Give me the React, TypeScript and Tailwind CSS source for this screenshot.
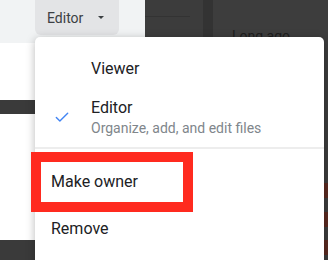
import { Check } from "lucide-react";

export default function App() {
  return (
    <div className="relative flex h-[260px] w-[328px] overflow-hidden font-['Roboto',sans-serif]">
      {/* Left page area */}
      <div className="flex w-[145px] flex-col">
        <div className="h-[43px] bg-[#f1f3f4] pl-[35px]">
          <div className="flex h-[35px] w-[84px] items-center rounded-b-[6px] bg-[#e3e4e6] pl-[12px]">
            <span className="text-[14px] leading-none text-[#3c4043]">Editor</span>
            <svg width="6" height="3" viewBox="0 0 6 3" className="ml-[15px]">
              <path d="M0 0h6L3 3z" fill="#3c4043" />
            </svg>
          </div>
        </div>
        <div className="flex flex-1 flex-col bg-white">
          <div className="mt-[57px] h-[14px] bg-[#3a3a3a]" />
          <div className="mt-[126px] flex-1 bg-[#3a3a3a]" />
        </div>
      </div>

      {/* Dark side panels */}
      <div className="w-[58px] bg-[#3c3c3c] pt-[16px]">
        <div className="h-px w-[45px] bg-[#333333]" />
      </div>
      <div className="w-[10px] bg-[#333333]" />
      <div className="flex flex-1 flex-col items-end bg-[#3d3d3d]">
        <div className="w-full pl-[19px] pt-[26px] text-[14px] leading-[20px] text-[#1e1e1e]">Long ago</div>
        <div className="mt-[137px] h-[15px] w-[4px] bg-[#5a2a20]" />
        <div className="mt-[14px] h-[15px] w-[4px] bg-[#5a2a20]" />
        <div className="mt-[13px] h-[15px] w-[4px] bg-[#5a2a20]" />
      </div>

      {/* Dropdown menu */}
      <div className="absolute left-[35px] top-[37px] h-[240px] w-[289px] rounded-t-[5px] bg-white shadow-[0_2px_10px_rgba(0,0,0,0.28)]">
        <div className="pl-[56px] pt-[22px] text-[16px] leading-[20px] text-[#202124]">Viewer</div>
        <div className="relative mt-[19px] pl-[56px]">
          <Check className="absolute left-[18px] top-[11px] h-[17px] w-[18px] text-[#4285f4]" strokeWidth={2} />
          <div className="text-[16px] leading-[20px] text-[#202124]">Editor</div>
          <div className="mt-px text-[14px] leading-[18px] text-[#80868b]">Organize, add, and edit files</div>
        </div>
        <div className="mt-[10px] h-[2px] bg-[#ededed]" />
        <div className="mt-[23px] pl-[16px] text-[16px] leading-[20px] text-[#202124]">Make owner</div>
        <div className="mt-[27px] pl-[16px] text-[16px] leading-[20px] text-[#202124]">Remove</div>
      </div>

      {/* Red highlight annotation */}
      <div className="absolute left-[31px] top-[152px] h-[60px] w-[162px] border-[10px] border-[#ff2a1f]" />
    </div>
  );
}
